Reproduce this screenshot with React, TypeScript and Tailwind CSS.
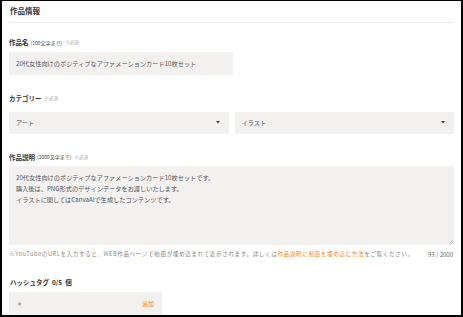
const font = { fontFamily: '"Noto Sans CJK JP", "Noto Sans", sans-serif' }

function Label({ title, limit }: { title: string; limit?: string }) {
  return (
    <div className="flex h-[10px] items-center gap-[2px] leading-none">
      <span className="text-[6.5px] font-bold text-[#333]">{title}</span>
      {limit && <span className="text-[5px] text-[#444]">{limit}</span>}
      <span className="ml-[1px] text-[4.5px] text-[#aaa]">※必須</span>
    </div>
  )
}

function Caret() {
  return (
    <svg width="4" height="3" viewBox="0 0 4 3" className="shrink-0">
      <path d="M0 0 L4 0 L2 2.5 Z" fill="#444" />
    </svg>
  )
}

export default function App() {
  return (
    <div
      style={font}
      className="flex h-[317px] w-[463px] flex-col border-t border-r-2 border-b-2 border-l-2 border-black bg-white px-[7px] text-[#555]"
    >
      <div className="mt-[4px] flex h-[11px] items-center px-[1px] text-[7.5px] font-bold text-[#333]">作品情報</div>
      <div className="mt-[6px] h-px bg-[#ececec]" />

      <div className="mt-[14px]">
        <Label title="作品名" limit="(100文字まで)" />
      </div>
      <div className="mt-[5px] flex h-[23px] w-[224px] items-center bg-[#f2f1ef] px-[7px] text-[6.2px]">
        20代女性向けのポジティブなアファメーションカード10枚セット
      </div>

      <div className="mt-[18px]">
        <Label title="カテゴリー" />
      </div>
      <div className="mt-[9px] flex gap-[6px]">
        <div className="flex h-[22px] flex-1 items-center justify-between bg-[#f2f1ef] pr-[9px] pl-[7px] text-[6.2px]">
          <span>アート</span>
          <Caret />
        </div>
        <div className="flex h-[22px] flex-1 items-center justify-between bg-[#f2f1ef] pr-[9px] pl-[7px] text-[6.2px]">
          <span>イラスト</span>
          <Caret />
        </div>
      </div>

      <div className="mt-[18px]">
        <Label title="作品説明" limit="(2000文字まで)" />
      </div>
      <div className="relative mt-[4px] h-[80px] bg-[#f2f1ef] px-[7px] pt-[6px] text-[6.2px] leading-[11px]">
        <div>20代女性向けのポジティブなアファメーションカード10枚セットです。</div>
        <div>購入後は、PNG形式のデザインデータをお渡しいたします。</div>
        <div>イラストに関してはCanvaAIで生成したコンテンツです。</div>
        <svg width="4" height="4" viewBox="0 0 4 4" className="absolute right-[1px] bottom-[1px]">
          <path d="M4 0 L0 4 M4 2 L2 4" stroke="#999" strokeWidth="0.6" />
        </svg>
      </div>
      <div className="mt-[4px] flex h-[10px] items-center justify-between text-[5.6px] tracking-[0.6px] text-[#888]">
        <span>
          ※YouTubeのURLを入力すると、WEB作品ページで動画が埋め込まれて表示されます。詳しくは
          <span className="text-[#f08a24]">作品説明に動画を埋め込む方法</span>
          をご覧ください。
        </span>
        <span className="mr-[1px] text-[6px] tracking-normal text-[#666]">93 / 2000</span>
      </div>

      <div className="mt-[18px] flex h-[11px] items-center gap-[3px] px-[1px] text-[6.5px] font-bold text-[#333]">
        <span>ハッシュタグ</span>
        <span>0/5</span>
        <span>個</span>
      </div>
      <div className="mt-[4px] flex h-[23px] w-[153px] items-center justify-between bg-[#f2f1ef] pr-[8px] pl-[9px] text-[6px]">
        <span className="text-[#888]">#</span>
        <span className="text-[#f08a24]">追加</span>
      </div>
    </div>
  )
}
